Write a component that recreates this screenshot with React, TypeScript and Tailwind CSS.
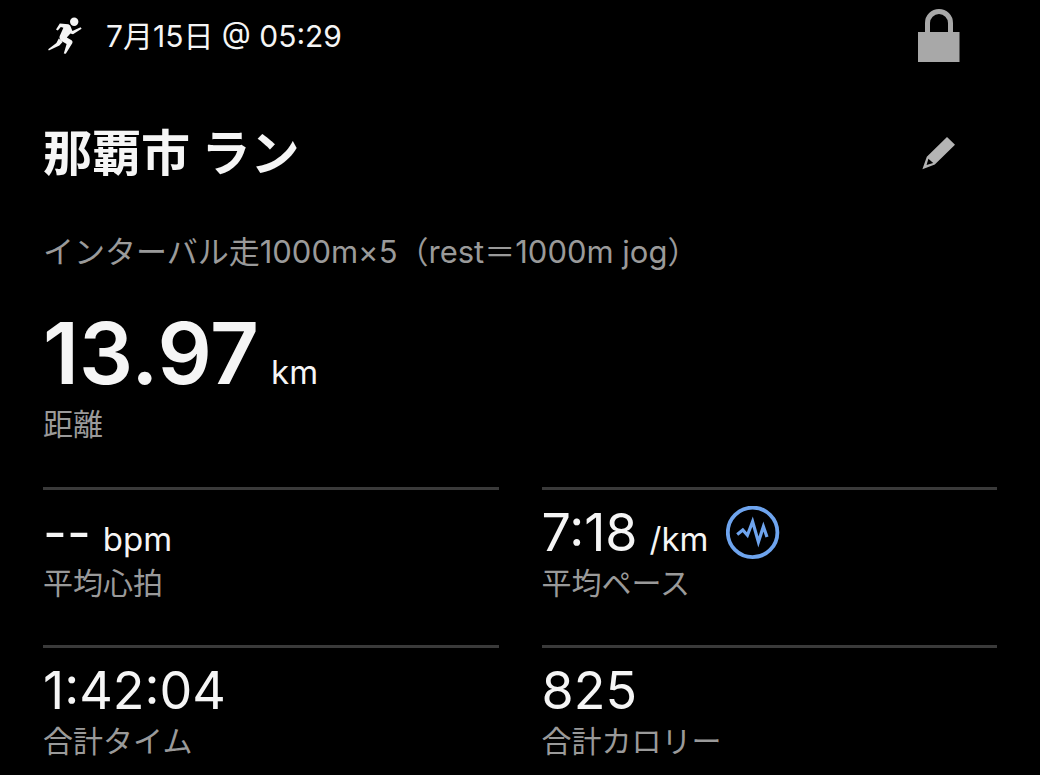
import type { ReactNode } from "react";

type Stat = {
  label: string;
  value: string;
  unit?: string;
  action?: ReactNode;
};

function RunnerIcon() {
  return (
    <svg viewBox="0 0 34 38" className="h-[38px] w-[34px] shrink-0" fill="currentColor" aria-hidden="true">
      <circle cx="26.2" cy="4.7" r="4.2" />
      <path d="M11.8 6.4 20.4 7.2Q22.6 8 23 10.4L24.4 14 32.6 10.2 33.6 11.8 25 17.2 22.4 16.4 18.8 20.6 23.6 23.2Q25 24.2 24.4 26L17.8 36.8 15.8 36.4 18.6 27 12.6 23.4Q10.8 21.6 11.6 19.2L15.4 10.8 12.8 10 9.8 13.6 8 12.6Z" />
      <path d="M10.8 21.6 14.6 25 11.4 28.4 0.8 33.4 0.2 32.2 8.4 26Z" />
    </svg>
  );
}

function LockIcon() {
  return (
    <svg viewBox="0 0 42 54" className="h-[54px] w-[42px]" aria-hidden="true">
      <path d="M9.5 25V14a11.5 11.5 0 0 1 23 0V25" fill="none" stroke="currentColor" strokeWidth="5" />
      <path d="M0 23h41.5v30H0z" fill="currentColor" />
    </svg>
  );
}

function PencilIcon() {
  return (
    <svg viewBox="0 0 34 34" className="size-[34px]" fill="currentColor" aria-hidden="true">
      <path fillRule="evenodd" d="M25 0 33 7.8 12.8 27.6 0.4 32.2 4.8 19.8ZM6.4 21.8 4.6 28 11.2 26Z" />
    </svg>
  );
}

function PulseIcon() {
  return (
    <svg viewBox="0 0 54 54" className="size-[54px]" fill="none" stroke="currentColor" aria-hidden="true">
      <circle cx="26.6" cy="26.4" r="24.8" strokeWidth="3.8" />
      <path d="M11.2 28.4 16.8 24 21.4 29.2 26.6 15.6 32.4 36 37.4 20.6 41 31" strokeWidth="3.2" strokeMiterlimit="10" />
    </svg>
  );
}

const stats: Stat[] = [
  { label: "平均心拍", value: "--", unit: "bpm" },
  {
    label: "平均ペース",
    value: "7:18",
    unit: "/km",
    action: (
      <button type="button" aria-label="ペースのグラフ" className="ml-[18px] text-[#6ea4ee]">
        <PulseIcon />
      </button>
    ),
  },
  { label: "合計タイム", value: "1:42:04" },
  { label: "合計カロリー", value: "825" },
];

function StatCell({ label, value, unit, action }: Stat) {
  return (
    <div className="flex flex-col border-t-3 border-[#3a3a3a] pt-[13px]">
      <dd className="flex h-[60px] items-center">
        <span className="flex items-baseline gap-3">
          <span className="text-[52px] leading-[60px]">{value}</span>
          {unit && <span className="text-[33px] leading-10">{unit}</span>}
        </span>
        {action}
      </dd>
      <dt className="order-last text-[30px] leading-10 text-[#9a9a9a]">{label}</dt>
    </div>
  );
}

export default function App() {
  return (
    <main
      lang="ja"
      className="min-h-screen bg-black px-[43px] pt-2 font-['Inter','Noto_Sans_CJK_JP',sans-serif] text-[#f5f5f5]"
    >
      <header className="flex h-14 items-center pr-[37px]">
        <span className="ml-[5px] flex">
          <RunnerIcon />
        </span>
        <time className="ml-6 text-[30px] leading-10">7月15日 @ 05:29</time>
        <button type="button" aria-label="公開範囲" className="ml-auto text-[#a8a8a8]">
          <LockIcon />
        </button>
      </header>

      <div className="mt-[58px] flex items-center justify-between pr-[41px]">
        <h1 className="text-[49px] leading-[64px] font-bold">那覇市 ラン</h1>
        <button type="button" aria-label="編集" className="text-[#b4b4b4]">
          <PencilIcon />
        </button>
      </div>

      <p className="mt-[46px] text-[31px] leading-10 text-[#9a9a9a]">
        インターバル走1000m×5（rest＝1000m jog）
      </p>

      <dl>
        <div className="mt-10 flex flex-col">
          <dd className="flex items-baseline gap-3">
            <span className="text-[85px] leading-[84px] font-semibold">13.97</span>
            <span className="text-[33px] leading-10">km</span>
          </dd>
          <dt className="order-last mt-2 text-[30px] leading-10 text-[#9a9a9a]">距離</dt>
        </div>

        <div className="mt-[43px] grid grid-cols-2 gap-x-[43px] gap-y-[42px]">
          {stats.map((s) => (
            <StatCell key={s.label} {...s} />
          ))}
        </div>
      </dl>
    </main>
  );
}
